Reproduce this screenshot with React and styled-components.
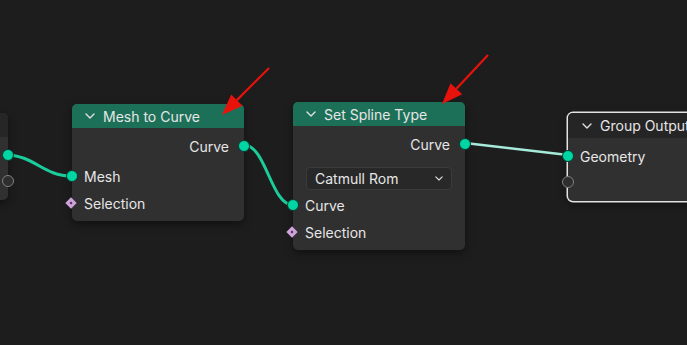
import styled, { createGlobalStyle } from 'styled-components';

const GlobalStyle = createGlobalStyle`
    body {
        margin: 0;
        background: #1d1d1d;
        font-family: Inter, 'Noto Sans', sans-serif;
    }
`;

const Canvas = styled.div`
    position: relative;
    width: 687px;
    height: 345px;
    overflow: hidden;
    background: #1d1d1d;
`;

const Wires = styled.svg`
    position: absolute;
    left: 0;
    top: 0;
    pointer-events: none;
    z-index: ${(p) => p.$z};
`;

const Node = styled.div`
    position: absolute;
    left: ${(p) => p.$x}px;
    top: ${(p) => p.$y}px;
    width: ${(p) => p.$w}px;
    z-index: 1;
    background: #303030;
    border-radius: 5px;
    box-shadow: ${(p) =>
        p.$selected
            ? '0 0 0 1.5px #e4e4e4, 0 3px 8px rgba(0,0,0,0.45)'
            : '0 3px 8px rgba(0,0,0,0.45)'};
    color: #e6e6e6;
    font-size: 14px;
    padding-bottom: ${(p) => p.$pb ?? 7}px;
`;

const Header = styled.div`
    display: flex;
    align-items: center;
    gap: 8px;
    height: ${(p) => p.$h ?? 24}px;
    padding-left: ${(p) => p.$pl ?? 13}px;
    background: ${(p) => p.$color};
    border-radius: 5px 5px 0 0;
    white-space: nowrap;
    margin-bottom: 7px;
`;

const Row = styled.div`
    position: relative;
    display: flex;
    align-items: center;
    justify-content: ${(p) => (p.$out ? 'flex-end' : 'flex-start')};
    height: 22px;
    padding: ${(p) => (p.$out ? '0 15px 0 0' : '0 0 0 12px')};
    margin-top: ${(p) => p.$mt ?? 0}px;
    white-space: nowrap;
`;

const Socket = styled.span`
    position: absolute;
    top: 50%;
    ${(p) => (p.$out ? 'right: -6px;' : 'left: -6px;')}
    width: 12px;
    height: 12px;
    margin-top: -6px;
    box-sizing: border-box;
    border-radius: 50%;
    background: ${(p) => (p.$empty ? '#2e2e2e' : '#00d6a3')};
    border: ${(p) => (p.$empty ? '1.5px solid #808080' : '1px solid #0b3b2f')};
`;

const Diamond = styled.span`
    position: absolute;
    top: 50%;
    left: -5px;
    width: 8px;
    height: 8px;
    margin-top: -4px;
    transform: rotate(45deg);
    background: #cfa2dc;
    &::after {
        content: '';
        position: absolute;
        left: 3px;
        top: 3px;
        width: 2px;
        height: 2px;
        background: #3a2a40;
    }
`;

const Select = styled.div`
    display: flex;
    align-items: center;
    justify-content: space-between;
    height: 23px;
    margin: 12px 13px 4px;
    padding: 0 8px;
    background: #282828;
    border: 1px solid #3b3b3b;
    border-radius: 4px;
    box-sizing: border-box;
`;

const Chevron = ({ size = 10 }) => (
    <svg width={size} height={size * 0.6} viewBox="0 0 10 6">
        <polyline
            points="1,1 5,5 9,1"
            fill="none"
            stroke="#e0e0e0"
            strokeWidth="1.4"
            strokeLinecap="round"
            strokeLinejoin="round"
        />
    </svg>
);

const wire = (x1, y1, x2, y2) => {
    const d = Math.max(Math.abs(x2 - x1) * 0.45, 20);
    return `M${x1},${y1} C${x1 + d},${y1} ${x2 - d},${y2} ${x2},${y2}`;
};

const Arrow = ({ x1, y1, x2, y2 }) => {
    const a = Math.atan2(y2 - y1, x2 - x1);
    const len = 21;
    const half = 8;
    const bx = x2 - Math.cos(a) * len;
    const by = y2 - Math.sin(a) * len;
    const px = -Math.sin(a) * half;
    const py = Math.cos(a) * half;
    return (
        <g>
            <line x1={x1} y1={y1} x2={bx} y2={by} stroke="#e8120c" strokeWidth="2.2" />
            <polygon
                points={`${x2},${y2} ${bx + px},${by + py} ${bx - px},${by - py}`}
                fill="#e8120c"
            />
        </g>
    );
};

function App() {
    return (
        <>
            <GlobalStyle />
            <Canvas>
                <Wires width="687" height="345" $z={0}>
                    <path d={wire(5, 155, 72, 176)} stroke="#1ccc9b" strokeWidth="3" fill="none" />
                    <path d={wire(244, 145, 293, 205)} stroke="#1ccc9b" strokeWidth="3" fill="none" />
                    <line x1="465" y1="143" x2="568" y2="155" stroke="#a6eadb" strokeWidth="2.6" />
                </Wires>

                <Node $x={-100} $y={113} $w={108} $pb={8}>
                    <Header $color="#262626" $h={24} />
                    <Row $out>
                        <Socket $out />
                    </Row>
                    <Row $out $mt={4}>
                        <Socket $out $empty />
                    </Row>
                </Node>

                <Node $x={72} $y={104} $w={172}>
                    <Header $color="#1d7058">
                        <Chevron />
                        Mesh to Curve
                    </Header>
                    <Row $out>
                        Curve
                        <Socket $out />
                    </Row>
                    <Row $mt={8}>
                        <Socket />
                        Mesh
                    </Row>
                    <Row $mt={5}>
                        <Diamond />
                        Selection
                    </Row>
                </Node>

                <Node $x={293} $y={102} $w={172}>
                    <Header $color="#1d7058">
                        <Chevron />
                        Set Spline Type
                    </Header>
                    <Row $out>
                        Curve
                        <Socket $out />
                    </Row>
                    <Select>
                        Catmull Rom
                        <Chevron size={8} />
                    </Select>
                    <Row>
                        <Socket />
                        Curve
                    </Row>
                    <Row $mt={5}>
                        <Diamond />
                        Selection
                    </Row>
                </Node>

                <Node $x={568} $y={113} $w={160} $selected $pb={8}>
                    <Header $color="#252525" $h={25} $pl={14}>
                        <Chevron />
                        Group Output
                    </Header>
                    <Row>
                        <Socket />
                        Geometry
                    </Row>
                    <Row $mt={4}>
                        <Socket $empty />
                    </Row>
                </Node>

                <Wires width="687" height="345" $z={2}>
                    <Arrow x1={269} y1={68} x2={222} y2={115} />
                    <Arrow x1={488} y1={55} x2={442} y2={104} />
                </Wires>
            </Canvas>
        </>
    );
}

export default App;
